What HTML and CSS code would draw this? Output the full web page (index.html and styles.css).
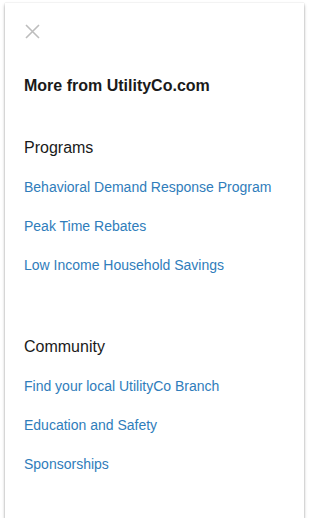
FILE: index.html
```html
<!DOCTYPE html>
<html lang="en">
<head>
    <meta charset="UTF-8">
    <meta name="viewport" content="width=device-width, initial-scale=1.0">
    <title>More from UtilityCo.com</title>
    <link rel="stylesheet" href="styles.css">
</head>
<body>
    <div class="drawer">
        <button class="close-btn" aria-label="Close">
            <svg width="15" height="15" viewBox="0 0 15 15">
                <path d="M1 1 L14 14 M14 1 L1 14" stroke="#bdbdbd" stroke-width="1.6" fill="none"/>
            </svg>
        </button>

        <h1 class="drawer-title">More from UtilityCo.com</h1>

        <div class="link-group">
            <h2>Programs</h2>
            <a href="#">Behavioral Demand Response Program</a>
            <a href="#">Peak Time Rebates</a>
            <a href="#">Low Income Household Savings</a>
        </div>

        <div class="link-group">
            <h2>Community</h2>
            <a href="#">Find your local UtilityCo Branch</a>
            <a href="#">Education and Safety</a>
            <a href="#">Sponsorships</a>
        </div>
    </div>
</body>
</html>
```

FILE: styles.css
```css
body {
    margin: 0;
    background: #fff;
    font-family: "Liberation Sans", Arial, sans-serif;
}
.drawer {
    margin: 3px 6px 0 5px;
    height: 515px;
    box-sizing: border-box;
    padding: 21px 19px 0 19px;
    background: #fff;
    box-shadow: 0 2px 3px rgba(0, 0, 0, 0.35), 0 0 1px rgba(0, 0, 0, 0.2);
}
.close-btn {
    display: block;
    padding: 0;
    margin: 0 0 0 1px;
    border: 0;
    background: none;
    width: 15px;
    height: 15px;
}
.close-btn svg {
    display: block;
}
.drawer-title {
    margin: 37px 0 0 0;
    font-size: 16px;
    line-height: 20px;
    font-weight: bold;
    color: #1a1a1a;
}
.link-group {
    display: flex;
    flex-direction: column;
    margin-top: 42px;
}
.link-group + .link-group {
    margin-top: 62px;
}
.link-group h2 {
    margin: 0;
    font-size: 16px;
    line-height: 20px;
    font-weight: normal;
    color: #1a1a1a;
}
.link-group a {
    margin-top: 19px;
    font-size: 14px;
    line-height: 20px;
    color: #2f7dbb;
    text-decoration: none;
}
```
